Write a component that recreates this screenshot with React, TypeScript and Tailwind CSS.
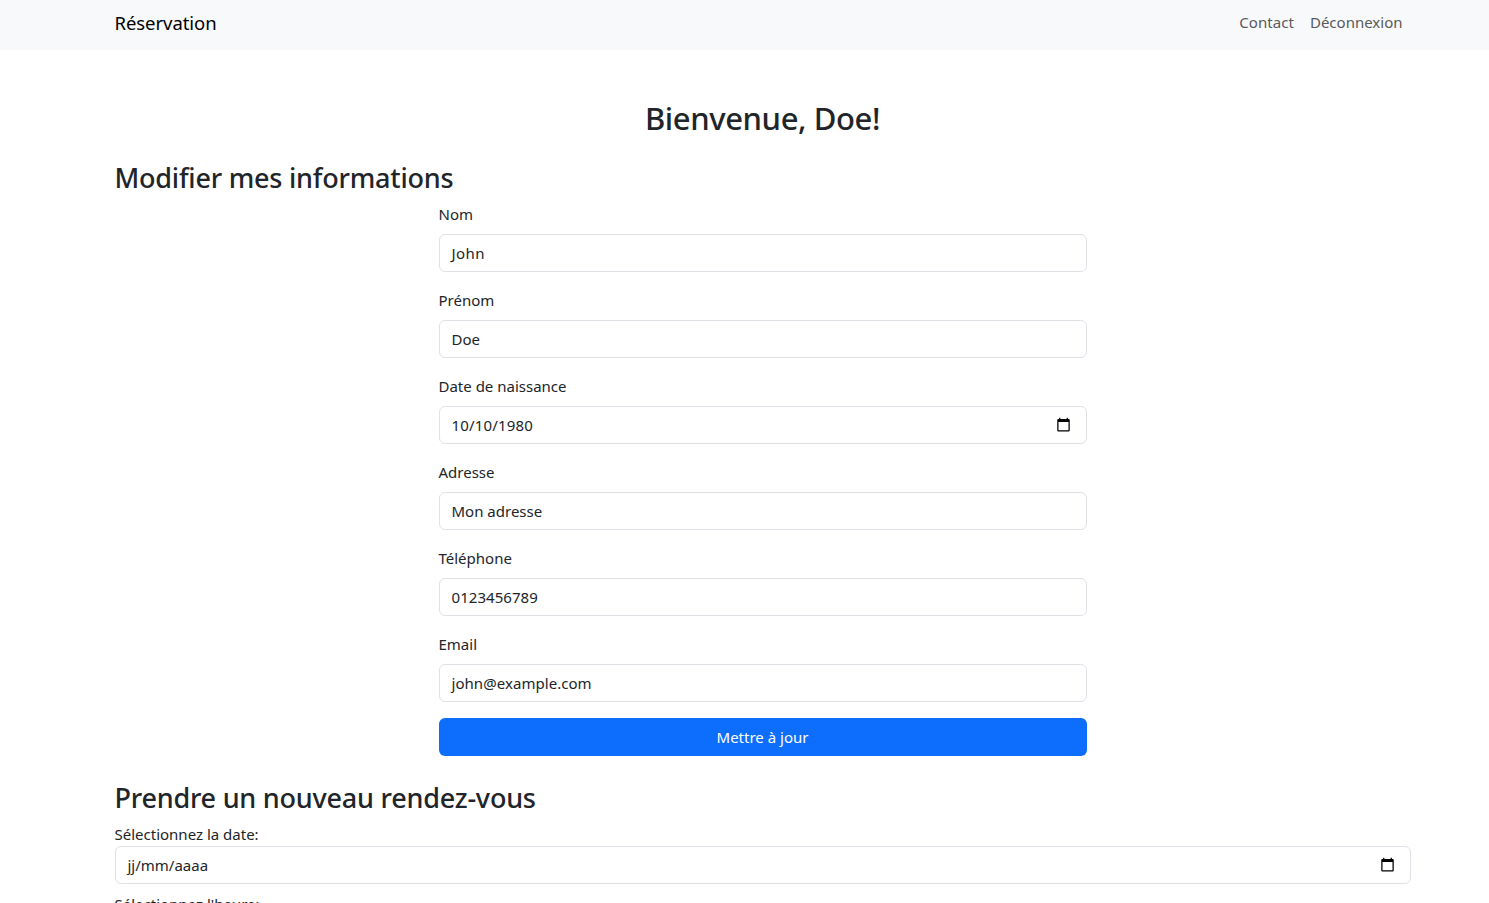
import { useId } from "react";

function CalendarIcon() {
  return (
    <svg width="15" height="15" viewBox="0 0 24 24" fill="#000" aria-hidden="true">
      <path d="M20 3h-1V1h-2v2H7V1H5v2H4c-1.100 0-2 .9-2 2v16c0 1.100.9 2 2 2h16c1.100 0 2-.9 2-2V5c0-1.100-.9-2-2-2zm0 18H4V8h16v13z" />
    </svg>
  );
}

type FieldProps = {
  label: string;
  value?: string;
  placeholder?: string;
  date?: boolean;
  tight?: boolean;
  inputClass?: string;
};

function Field({ label, value, placeholder, date, tight, inputClass = "" }: FieldProps) {
  const id = useId();
  return (
    <div className={tight ? "mb-2" : "mb-4"}>
      <label htmlFor={id} className={`block leading-6 ${tight ? "" : "mb-2"}`}>
        {label}
      </label>
      <div className="flex h-[38px] items-center rounded-md border border-[#dee2e6] bg-white pr-[14.5px] pl-2">
        <input
          id={id}
          type="text"
          defaultValue={value}
          placeholder={placeholder}
          className={`h-6 min-w-0 flex-1 bg-transparent indent-1 leading-6 outline-none placeholder:text-[#212529] ${inputClass}`}
        />
        {date && <span className="pb-px"><CalendarIcon /></span>}
      </div>
    </div>
  );
}

export default function App() {
  return (
    <div className="h-[903px] w-full overflow-hidden bg-white font-['Noto_Sans','Open_Sans',sans-serif] text-[15px] text-[#212529]">
      <nav className="h-[50px] bg-[#f8f9fa] pl-[114.5px]">
        <div className="flex h-[45px] w-[1296px] items-center justify-between">
          <a href="#" className="text-[18.5px] leading-[30px] tracking-[-0.06px] text-black">Réservation</a>
          <div className="flex gap-4 pr-2 text-[#595a5b]">
            <a href="#" className="tracking-[0.05px]">Contact</a>
            <a href="#">Déconnexion</a>
          </div>
        </div>
      </nav>
      <main className="ml-[114.5px] w-[1296px] pt-[49px]">
        <h1 className="mb-6 text-center text-[31px] leading-[38.4px] font-[550] tracking-[-0.4px]">Bienvenue, Doe!</h1>
        <section>
          <h2 className="mb-[7px] text-[27px] leading-[33.6px] font-[550] tracking-[-0.22px]">Modifier mes informations</h2>
          <form className="mx-auto w-[648px]" onSubmit={(e) => e.preventDefault()}>
            <Field label="Nom" value="John" inputClass="tracking-[0.4px]" />
            <Field label="Prénom" value="Doe" />
            <Field label="Date de naissance" value="10/10/1980" inputClass="tracking-[0.17px]" date />
            <Field label="Adresse" value="Mon adresse" />
            <Field label="Téléphone" value="0123456789" inputClass="tracking-[0.05px]" />
            <Field label="Email" value="john@example.com" inputClass="tracking-[0.05px]" />
            <button className="block h-[38px] w-full rounded-md bg-[#0d6efd] text-white">Mettre à jour</button>
          </form>
        </section>
        <section className="mt-[25px]">
          <h2 className="mb-[7px] text-[27px] leading-[33.6px] font-[550] tracking-[-0.22px]">Prendre un nouveau rendez-vous</h2>
          <Field label="Sélectionnez la date:" placeholder="jj/mm/aaaa" date tight />
          <Field label="Sélectionnez l'heure:" tight />
        </section>
      </main>
    </div>
  );
}
